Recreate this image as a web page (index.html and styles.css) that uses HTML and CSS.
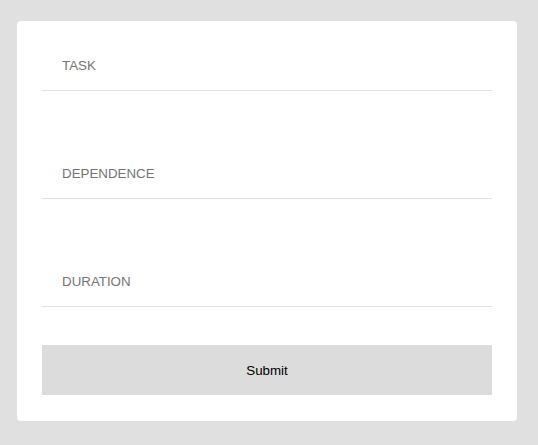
FILE: index.html
```html
<!DOCTYPE html>
<html>
<head>
<meta charset="utf-8">
<link rel="stylesheet" href="styles.css">
</head>
<body>
<form class="card">
  <input class="field" type="text" placeholder="TASK">
  <input class="field" type="text" placeholder="DEPENDENCE">
  <input class="field" type="text" placeholder="DURATION">
  <button class="submit" type="button">Submit</button>
</form>
</body>
</html>
```
FILE: styles.css
```css
html, body {
  margin: 0;
  padding: 0;
}
body {
  background: #e0e0e0;
  width: 538px;
  height: 445px;
  padding: 21px 0 0 17px;
  box-sizing: border-box;
  font-family: "Liberation Sans", Arial, sans-serif;
}
.card {
  box-sizing: border-box;
  width: 500px;
  height: 400px;
  margin: 0;
  background: #ffffff;
  border-radius: 4px;
  padding: 25px 25px 0 25px;
  display: flex;
  flex-direction: column;
}
.field {
  display: block;
  box-sizing: content-box;
  width: 410px;
  margin: 0 0 63px 0;
  padding: 12px 20px 16px 20px;
  height: 16px;
  line-height: 16px;
  border: 0;
  border-bottom: 1px solid #e3e3e3;
  outline: none;
  background: transparent;
  font-family: "Liberation Sans", Arial, sans-serif;
  font-size: 13.333px;
  color: #333;
}
.field::placeholder {
  color: #757575;
  opacity: 1;
}
.field:last-of-type {
  margin-bottom: 38px;
}
.submit {
  display: block;
  width: 450px;
  height: 50px;
  margin: 0;
  padding: 0;
  border: 0;
  background: #dcdcdc;
  color: #000;
  font-family: "Liberation Sans", Arial, sans-serif;
  font-size: 13.333px;
  cursor: pointer;
}
```
